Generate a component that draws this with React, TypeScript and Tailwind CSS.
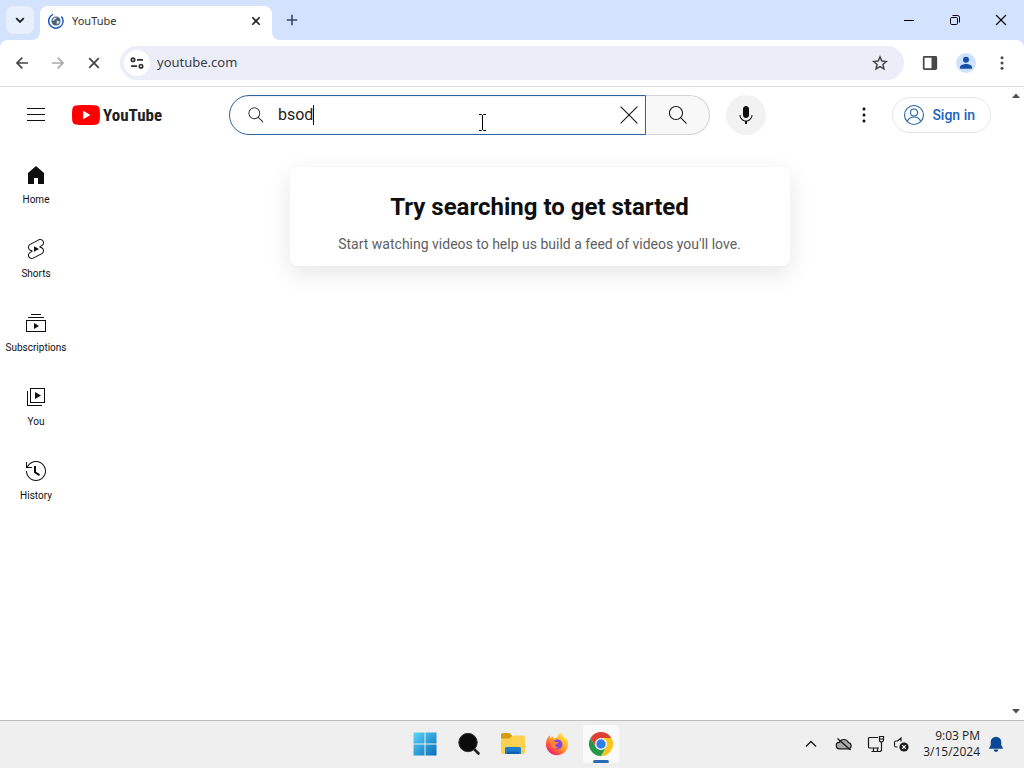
import { useState } from "react";
import type { ReactNode } from "react";

const ICONS = {
  home: "M4 21V10.08l8-6.96 8 6.96V21h-6v-6h-4v6H4z",
  shorts:
    "M10 14.65v-5.3L15 12l-5 2.65zm7.77-4.33-1.2-.5L18 9.06c1.84-.96 2.53-3.23 1.56-5.06s-3.24-2.53-5.07-1.56L6 6.94c-1.29.68-2.07 2.04-2 3.49.07 1.42.93 2.67 2.22 3.25.03.01 1.2.5 1.2.5L6 14.93c-1.83.97-2.53 3.24-1.56 5.07.97 1.83 3.24 2.53 5.07 1.56l8.5-4.5c1.29-.68 2.06-2.04 1.99-3.49-.07-1.42-.94-2.68-2.23-3.25zm-.23 5.86-8.5 4.5c-1.34.71-3.01.2-3.72-1.14-.71-1.34-.2-3.01 1.14-3.72l2.04-1.08v-1.21l-.69-.28-1.11-.46c-.99-.41-1.65-1.35-1.7-2.41-.05-1.06.52-2.06 1.46-2.56l8.5-4.5c1.34-.71 3.01-.2 3.72 1.14.71 1.34.2 3.01-1.14 3.72L15.5 9.26v1.21l1.8.74c.99.41 1.65 1.35 1.7 2.41.05 1.06-.52 2.06-1.46 2.56z",
  subscriptions: "M10 18v-6l5 3-5 3zm7-15H7v1h10V3zm3 3H4v1h16V6zm2 3H2v12h20V9zM3 10h18v10H3V10z",
  you: "m11 7 6 3.5-6 3.5V7zm7 13H4V6H3v15h15v-1zm3-2H6V3h15v15zM7 17h13V4H7v13z",
  history:
    "M14.97 16.95 10 13.87V7h2v5.76l4.03 2.49-1.06 1.7zM22 12c0 5.51-4.49 10-10 10S2 17.51 2 12h1c0 4.96 4.04 9 9 9s9-4.04 9-9-4.04-9-9-9C8.81 3 5.92 4.64 4.28 7.38c-.11.18-.22.37-.31.56L3.94 8H8v1H1.96V3h1v4.74c.04-.09.07-.17.11-.25.11-.22.23-.42.35-.63C5.22 3.86 8.51 2 12 2c5.51 0 10 4.49 10 10z",
  search:
    "m20.87 20.17-5.59-5.59C16.35 13.35 17 11.75 17 10c0-3.87-3.13-7-7-7s-7 3.13-7 7 3.13 7 7 7c1.75 0 3.35-.65 4.58-1.71l5.59 5.59.7-.71zM10 16c-3.31 0-6-2.69-6-6s2.69-6 6-6 6 2.69 6 6-2.69 6-6 6z",
  mic: "M12 3c-1.66 0-3 1.37-3 3.07v5.86c0 1.7 1.34 3.07 3 3.07s3-1.37 3-3.07V6.07C15 4.37 13.66 3 12 3zm6.5 9h-1c0 3.03-2.47 5.5-5.5 5.5S6.5 15.03 6.5 12h-1c0 3.24 2.39 5.93 5.5 6.41V21h2v-2.59c3.11-.48 5.5-3.17 5.5-6.41z",
  menu: "M21 6H3V5h18v1zm0 5H3v1h18v-1zm0 6H3v1h18v-1z",
  clear: "M12.7 12l8 8-.7.7-8-8-8 8-.7-.7 8-8-8-8 .7-.7 8 8 8-8 .7.7z",
  dots: "M12 16.5c.83 0 1.5.67 1.5 1.5s-.67 1.5-1.5 1.5-1.5-.67-1.5-1.5.67-1.5 1.5-1.5zM10.5 12c0 .83.67 1.5 1.5 1.5s1.5-.67 1.5-1.5-.67-1.5-1.5-1.5-1.5.67-1.5 1.5zm0-6c0 .83.67 1.5 1.5 1.5s1.5-.67 1.5-1.5-.67-1.5-1.5-1.5-1.5.67-1.5 1.5z",
};

type IconName = keyof typeof ICONS;

function Icon({ name, className = "size-6" }: { name: IconName; className?: string }) {
  return (
    <svg viewBox="0 0 24 24" className={className} fill="currentColor" aria-hidden="true">
      <path d={ICONS[name]} />
    </svg>
  );
}

function IconButton({ label, className, children }: { label: string; className: string; children: ReactNode }) {
  return (
    <button type="button" aria-label={label} className={`flex shrink-0 items-center justify-center ${className}`}>
      {children}
    </button>
  );
}

function TabStrip() {
  return (
    <div className="flex h-10 shrink-0 items-end bg-[#d3e3fd] text-[#1f1f1f]">
      <IconButton label="Search tabs" className="mb-1.5 ml-1.5 size-7 rounded-lg bg-[#e8f0fe]">
        <svg viewBox="0 0 12 12" className="size-3" fill="none" stroke="currentColor" strokeWidth="1.8">
          <path d="M2.2 4.2 6 8l3.8-3.8" />
        </svg>
      </IconButton>
      <div className="relative ml-1.5 flex h-[34px] w-[232px] items-center rounded-t-lg bg-white pl-2 pr-2 pb-1">
        <svg viewBox="0 0 8 8" className="absolute bottom-0 -left-2 size-2" fill="#fff">
          <path d="M8 0v8H0a8 8 0 0 0 8-8z" />
        </svg>
        <svg viewBox="0 0 8 8" className="absolute -right-2 bottom-0 size-2" fill="#fff">
          <path d="M0 0v8h8a8 8 0 0 1-8-8z" />
        </svg>
        <svg viewBox="0 0 16 16" className="size-4" fill="none">
          <path d="M5 1.4A7.2 7.2 0 1 0 13.4 3.400" stroke="#1a56c4" strokeWidth="1.5" />
          <circle cx="8" cy="8" r="4.600" fill="#4b5f74" />
          <path d="M4.600 6.500c1-2 3-2.400 4.400-1.800-.4 1.400-2 1.300-2.600 2.600L5 8.200z" fill="#c9dcea" />
          <path d="M8.600 8c1.500-.5 2.600 0 3 .6-.4 1.700-1.400 2.600-2.800 3z" fill="#c9dcea" />
        </svg>
        <span className="ml-2 flex-1 font-['Noto_Sans',sans-serif] text-[11px] text-[#333]">YouTube</span>
        <IconButton label="Close tab" className="size-4">
          <svg viewBox="0 0 16 16" className="size-4" fill="none" stroke="currentColor" strokeWidth="1.6">
            <path d="m4.300 4.300 7.400 7.400m0-7.400-7.400 7.400" />
          </svg>
        </IconButton>
      </div>
      <IconButton label="New tab" className="mb-1.5 ml-1.5 size-7">
        <svg viewBox="0 0 12 12" className="size-3" fill="none" stroke="#3a4663" strokeWidth="1.6">
          <path d="M6 .8v10.400M.8 6h10.400" />
        </svg>
      </IconButton>
      <div className="ml-auto flex self-stretch text-black">
        <IconButton label="Minimize" className="w-[46px]">
          <svg viewBox="0 0 12 12" className="size-3" stroke="currentColor">
            <path d="M1 6.500h10" />
          </svg>
        </IconButton>
        <IconButton label="Restore" className="w-[46px]">
          <svg viewBox="0 0 12 12" className="size-3" fill="none" stroke="currentColor">
            <rect x="1.500" y="3.500" width="7" height="7" rx="1.200" />
            <path d="M3.500 1.500h5a2 2 0 0 1 2 2v5" />
          </svg>
        </IconButton>
        <IconButton label="Close" className="w-[46px]">
          <svg viewBox="0 0 12 12" className="size-3" stroke="currentColor" strokeWidth="1.100">
            <path d="m1 1 10 10M11 1 1 11" />
          </svg>
        </IconButton>
      </div>
    </div>
  );
}

function Toolbar() {
  return (
    <div className="shrink-0 bg-[#d3e3fd]">
      <div className="flex h-[47px] items-center rounded-t-lg border-b border-[#dcdcdc] bg-white px-2 text-[#474747]">
        <div className="flex gap-2">
          <IconButton label="Back" className="size-7">
            <svg viewBox="0 0 16 16" className="size-4" fill="none" stroke="currentColor" strokeWidth="1.700">
              <path d="M14 8H3m5.300-5.300L3 8l5.300 5.300" />
            </svg>
          </IconButton>
          <IconButton label="Forward" className="size-7 text-[#ababab]">
            <svg viewBox="0 0 16 16" className="size-4" fill="none" stroke="currentColor" strokeWidth="1.700">
              <path d="M2 8h11M7.700 2.700 13 8l-5.300 5.300" />
            </svg>
          </IconButton>
          <IconButton label="Stop loading" className="size-7">
            <svg viewBox="0 0 16 16" className="size-4" fill="none" stroke="currentColor" strokeWidth="1.800">
              <path d="m3.200 3.200 9.600 9.600m0-9.600-9.600 9.600" />
            </svg>
          </IconButton>
        </div>
        <div className="mx-3 flex h-[34px] flex-1 items-center rounded-full bg-[#ebeef9] pl-1 pr-2.5">
          <IconButton label="View site information" className="size-[26px] rounded-full bg-white text-[#303030]">
            <svg viewBox="0 0 16 16" className="size-4" fill="none" stroke="currentColor" strokeWidth="1.700">
              <circle cx="4" cy="4.800" r="1.700" />
              <path d="M8 4.800h6M2 11.200h6" />
              <circle cx="12" cy="11.200" r="1.700" />
            </svg>
          </IconButton>
          <input
            aria-label="Address bar"
            defaultValue="youtube.com"
            className="ml-[7px] min-w-0 flex-1 bg-transparent font-['Noto_Sans',sans-serif] text-[13px] text-[#3a3c42] outline-none"
          />
          <IconButton label="Bookmark this tab" className="size-7">
            <svg viewBox="0 0 16 16" className="size-4" fill="none" stroke="currentColor" strokeWidth="1.500">
              <path d="m8 1.900 1.800 4.200 4.600.4-3.500 3 1.100 4.500L8 11.600 4 14l1.100-4.500-3.500-3 4.600-.4z" />
            </svg>
          </IconButton>
        </div>
        <div className="flex gap-2">
          <IconButton label="Side panel" className="size-7">
            <svg viewBox="0 0 16 16" className="size-4" fill="none" stroke="currentColor" strokeWidth="1.700">
              <rect x="1.700" y="1.900" width="12.600" height="12.200" rx=".6" />
              <path d="M9.500 2h5v12h-5z" fill="currentColor" stroke="none" />
            </svg>
          </IconButton>
          <IconButton label="Profile" className="size-7">
            <svg viewBox="0 0 20 20" className="size-5">
              <circle cx="10" cy="10" r="10" fill="#cfe2fd" />
              <circle cx="10" cy="6.800" r="3" fill="#174ea6" />
              <path d="M4 15.800v-1.600c0-2.200 3.500-3.200 6-3.200s6 1 6 3.200v1.600z" fill="#174ea6" />
            </svg>
          </IconButton>
          <IconButton label="Browser menu" className="size-7">
            <svg viewBox="0 0 16 16" className="size-4" fill="currentColor">
              <circle cx="8" cy="2.700" r="1.500" />
              <circle cx="8" cy="8" r="1.500" />
              <circle cx="8" cy="13.300" r="1.500" />
            </svg>
          </IconButton>
        </div>
      </div>
    </div>
  );
}

function Masthead() {
  const [query, setQuery] = useState("bsod");
  return (
    <header className="flex h-14 shrink-0 items-center px-4">
      <div className="flex w-[213px] shrink-0 items-center">
        <IconButton label="Guide" className="size-10">
          <Icon name="menu" />
        </IconButton>
        <a href="#home" className="ml-4 flex items-center gap-[3px]">
          <svg viewBox="0 0 28 20" className="h-5 w-7">
            <path
              d="M27.400 3.100A3.500 3.500 0 0 0 24.900.6C22.700 0 14 0 14 0S5.300 0 3.100.6A3.500 3.500 0 0 0 .6 3.100C0 5.300 0 10 0 10s0 4.700.6 6.900a3.500 3.500 0 0 0 2.500 2.500C5.300 20 14 20 14 20s8.700 0 10.900-.6a3.500 3.500 0 0 0 2.500-2.500C28 14.700 28 10 28 10s0-4.700-.6-6.900z"
              fill="#f00"
            />
            <path d="m11.200 14.300 7.300-4.300-7.300-4.300z" fill="#fff" />
          </svg>
          <span className="font-['Roboto_Condensed','Open_Sans_Condensed',Roboto,sans-serif] text-[17px] leading-5 font-bold text-[#212121]">
            YouTube
          </span>
        </a>
      </div>
      <form className="flex h-10 min-w-0 flex-1" role="search" onSubmit={(e) => e.preventDefault()}>
        <div className="relative flex min-w-0 flex-1 items-center rounded-l-full border border-[#2f62a3] pr-1 pl-4 shadow-[inset_0_1px_2px_#eeeeee]">
          <Icon name="search" className="size-5 shrink-0" />
          <label className="ml-3 flex min-w-0 flex-1 cursor-text items-center">
            <input
              aria-label="Search"
              value={query}
              onChange={(e) => setQuery(e.target.value)}
              className="field-sizing-content max-w-full bg-transparent text-base text-[#222] caret-transparent outline-none"
            />
            <span className="h-5 w-px bg-black" />
          </label>
          <IconButton label="Clear search query" className="size-6">
            <Icon name="clear" />
          </IconButton>
          <svg viewBox="0 0 9 17" className="absolute top-[18px] left-[248px] h-[17px] w-[9px]" fill="none" stroke="#000">
            <path d="M1 .5h2.500l1 1 1-1H8M4.500 1v15M1 16.500h2.500l1-1 1 1H8" />
          </svg>
        </div>
        <button
          type="submit"
          aria-label="Search"
          className="flex w-16 shrink-0 items-center justify-center rounded-r-full border border-l-0 border-[#d3d3d3] bg-[#f8f8f8]"
        >
          <Icon name="search" />
        </button>
      </form>
      <IconButton label="Search with your voice" className="ml-4 size-10 rounded-full bg-[#f2f2f2]">
        <Icon name="mic" />
      </IconButton>
      <div className="ml-[78px] flex items-center gap-2">
        <IconButton label="Settings" className="size-10">
          <Icon name="dots" />
        </IconButton>
        <a
          href="#signin"
          className="flex h-9 items-center gap-1.5 rounded-full border border-[#e5e5e5] pr-[15px] pl-[9px] text-sm font-medium whitespace-nowrap text-[#1b63bd]"
        >
          <svg viewBox="0 0 24 24" className="size-6" fill="none" stroke="#2a64a8" strokeWidth="1.100">
            <circle cx="12" cy="12" r="9.500" />
            <circle cx="12" cy="9.500" r="3.500" />
            <path d="M5.300 18.700c.9-2.800 3.400-4.700 6.700-4.700s5.800 1.900 6.700 4.700" />
          </svg>
          Sign in
        </a>
      </div>
    </header>
  );
}

const NAV: { label: string; icon: IconName }[] = [
  { label: "Home", icon: "home" },
  { label: "Shorts", icon: "shorts" },
  { label: "Subscriptions", icon: "subscriptions" },
  { label: "You", icon: "you" },
  { label: "History", icon: "history" },
];

function Page() {
  return (
    <div className="flex min-h-0 flex-1 bg-white font-[Roboto,sans-serif] text-[#0f0f0f]">
      <div className="flex min-w-0 flex-1 flex-col">
        <Masthead />
        <div className="flex flex-1">
          <nav className="w-[72px] shrink-0 pt-1" aria-label="Guide">
            {NAV.map((item) => (
              <a key={item.label} href={`#${item.label}`} className="flex h-[74px] flex-col items-center pt-4 text-[10px] leading-[14px]">
                <Icon name={item.icon} className="mb-1.5 size-6 shrink-0" />
                {item.label}
              </a>
            ))}
          </nav>
          <main className="flex flex-1 items-start justify-center px-4 pt-6">
            <section className="w-full max-w-[500px] rounded-lg pt-[22px] pb-3 text-center shadow-[0_8px_24px_rgba(0,0,0,0.1)]">
              <h1 className="text-2xl leading-9 font-bold">Try searching to get started</h1>
              <p className="mt-[9px] text-sm leading-5 text-[#606060]">
                Start watching videos to help us build a feed of videos you'll love.
              </p>
            </section>
          </main>
        </div>
      </div>
      <div className="flex w-[17px] shrink-0 flex-col items-center justify-between py-1.5">
        <svg viewBox="0 0 8 5" className="h-[5px] w-2" fill="#505050">
          <path d="M0 5 4 .5 8 5z" />
        </svg>
        <svg viewBox="0 0 8 5" className="h-[5px] w-2" fill="#505050">
          <path d="m0 0 4 4.500L8 0z" />
        </svg>
      </div>
    </div>
  );
}

function StartIcon() {
  return (
    <svg viewBox="0 0 24 24" className="size-6">
      <defs>
        <linearGradient id="win" gradientUnits="userSpaceOnUse" x1="0" y1="0" x2="24" y2="24">
          <stop offset="0" stopColor="#5fd8fb" />
          <stop offset="1" stopColor="#0669b8" />
        </linearGradient>
      </defs>
      <path d="M.5.500h11v11H.5zM12.500.500h11v11h-11zM.5 12.500h11v11H.5zM12.500 12.500h11v11h-11z" fill="url(#win)" />
    </svg>
  );
}

function MagnifierIcon() {
  return (
    <svg viewBox="0 0 24 24" className="size-6">
      <path d="m16 16 5.500 5.500" stroke="#222" strokeWidth="2.600" strokeLinecap="round" />
      <circle cx="11" cy="10.500" r="9.200" fill="#0b0b0b" stroke="#303030" />
    </svg>
  );
}

function FolderIcon() {
  return (
    <svg viewBox="0 0 26 24" className="h-6 w-[26px]">
      <path d="M1 3a2 2 0 0 1 2-2h6.500L12 3.500 11 8H1z" fill="#d39b13" />
      <path d="M1 6.500h8.500L13 3.500h10a2 2 0 0 1 2 2V20a2 2 0 0 1-2 2H3a2 2 0 0 1-2-2z" fill="#fbd14f" />
      <path d="M5 22v-5.500a1.500 1.500 0 0 1 1.500-1.500h13a1.500 1.500 0 0 1 1.500 1.500V22z" fill="#1f7bd0" />
      <path d="M7 19.500h12V22H7z" fill="#0f5fab" />
    </svg>
  );
}

function FirefoxIcon() {
  return (
    <svg viewBox="0 0 24 24" className="size-6">
      <defs>
        <linearGradient id="fox" x1=".9" y1=".1" x2=".2" y2=".95">
          <stop offset="0" stopColor="#fff04d" />
          <stop offset=".45" stopColor="#ffa42a" />
          <stop offset=".8" stopColor="#ff4a45" />
          <stop offset="1" stopColor="#e31587" />
        </linearGradient>
      </defs>
      <path
        d="M22.700 8.500c-.6-1.500-1.700-2.700-2.600-3.300.7 1.300 1 2.300 1.100 3C19.500 4.800 16.800 3.700 16 .6c-2.400 1.300-3.500 3.600-3.700 5-1.300.1-2.300.5-3.300 1.100-.6-.4-.9-1.500-.8-2.400-1.200.5-2 1.300-2.700 2.100-.5-.6-.6-1.800-.4-3.100C2.500 5 .9 8.500.9 12.300A11.200 11.200 0 0 0 12 23.300c6.200 0 11.200-5 11.200-11.200 0-1.200-.1-2.400-.5-3.600z"
        fill="url(#fox)"
      />
      <circle cx="12.500" cy="12.300" r="4.900" fill="#8347d9" />
      <path d="M5 9.200c2.200-1.300 4.700-.7 5.600.8 1.300-.2 3 .2 2.900.8-.3 1.100-2.900 1.100-3.100 2.500-.2 1.500 1.600 2.300 3.200 1.500-1 2.300-5.200 2.600-7-.2z" fill="#ff8139" />
    </svg>
  );
}

function ChromeIcon() {
  return (
    <svg viewBox="0 0 24 24" className="size-6">
      <path d="M12 6h10.400a12 12 0 0 1-10.400 18l5.200-9z" fill="#fbc61b" />
      <path d="M1.600 6 6.800 15l5.200 3 5.200-3L12 24A12 12 0 0 1 1.600 6z" fill="#23984a" />
      <path d="M1.600 6A12 12 0 0 1 22.400 6H12L6.800 15z" fill="#df3f34" />
      <circle cx="12" cy="12" r="6" fill="#fff" />
      <circle cx="12" cy="12" r="4.700" fill="#2f7de9" />
    </svg>
  );
}

function Taskbar() {
  const slot = "h-10 w-11";
  return (
    <footer className="grid h-12 shrink-0 grid-cols-[1fr_auto_1fr] items-center border-t border-[#bcbcbc] bg-[#efefef] pb-px">
      <div />
      <div className="flex items-center pl-0.5">
        <IconButton label="Start" className={slot}>
          <StartIcon />
        </IconButton>
        <IconButton label="Search" className={slot}>
          <MagnifierIcon />
        </IconButton>
        <IconButton label="File Explorer" className={slot}>
          <FolderIcon />
        </IconButton>
        <IconButton label="Firefox" className={slot}>
          <FirefoxIcon />
        </IconButton>
        <div className="relative px-1">
          <IconButton label="Google Chrome" className="h-[38px] w-9 rounded-sm bg-[#fafafa]">
            <ChromeIcon />
          </IconButton>
          <span className="absolute bottom-0 left-3.5 h-[3px] w-4 rounded-full bg-[#2a6bb8]" />
        </div>
      </div>
      <div className="flex items-center justify-end pr-5 text-[#1b1b1b]">
        <IconButton label="Show hidden icons" className="mr-4 size-4">
          <svg viewBox="0 0 16 16" className="size-4" fill="none" stroke="currentColor" strokeWidth="1.300">
            <path d="m3 10.500 5-5 5 5" />
          </svg>
        </IconButton>
        <IconButton label="Cloud storage, not connected" className="mr-3.5 h-4 w-[18px]">
          <svg viewBox="0 0 18 16" className="h-4 w-[18px]" fill="none" stroke="currentColor" strokeWidth="1.200">
            <path d="M4.600 12.800a3.200 3.200 0 0 1-.3-6.400 5 5 0 0 1 9.200.3 3.100 3.100 0 0 1 .1 6.100z" fill="#aaa" />
            <path d="m2.500 2.500 13 11.500" strokeWidth="1.400" />
          </svg>
        </IconButton>
        <IconButton label="Network" className="mr-2 size-[18px]">
          <svg viewBox="0 0 18 18" className="size-[18px]" fill="none" stroke="currentColor" strokeWidth="1.200">
            <path d="M11 2.500H2.500a1 1 0 0 0-1 1v8.500a1 1 0 0 0 1 1H12M4.500 16.500h8M6.500 13v3.500M10.500 13v3.500M14.500 7v7.500a2 2 0 0 1-2 2" />
            <path d="M12.500 1.500h4V5a2 2 0 0 1-4 0zM12.500 4h4" />
          </svg>
        </IconButton>
        <IconButton label="Volume muted" className="mr-3.5 h-4 w-4">
          <svg viewBox="0 0 16 16" className="size-4" fill="none" stroke="currentColor" strokeWidth="1.100">
            <path d="M4.500 11H3a1.500 1.500 0 0 1-1.500-1.500v-3A1.500 1.500 0 0 1 3 5h1.500L8 2v3.500" />
            <circle cx="11" cy="11" r="4.600" fill="#1b1b1b" stroke="none" />
            <path d="m9.200 9.200 3.600 3.600m0-3.600-3.600 3.600" stroke="#fff" />
          </svg>
        </IconButton>
        <time dateTime="2024-03-15T21:03" className="text-right font-['Open_Sans','Noto_Sans',sans-serif] text-xs leading-4">
          9:03 PM
          <br />
          3/15/2024
        </time>
        <IconButton label="Notifications" className="ml-2 size-4">
          <svg viewBox="0 0 16 16" className="size-4" fill="#0b4797">
            <path d="M8 .7a5.300 5.300 0 0 0-5.300 5.300v3.200L1.200 12v.7h13.600V12l-1.500-2.800V6A5.300 5.300 0 0 0 8 .7zM5.700 13.600a2.300 2.300 0 0 0 4.600 0z" />
          </svg>
        </IconButton>
      </div>
    </footer>
  );
}

export default function App() {
  return (
    <div className="flex h-screen flex-col overflow-hidden bg-white">
      <TabStrip />
      <Toolbar />
      <Page />
      <Taskbar />
    </div>
  );
}
